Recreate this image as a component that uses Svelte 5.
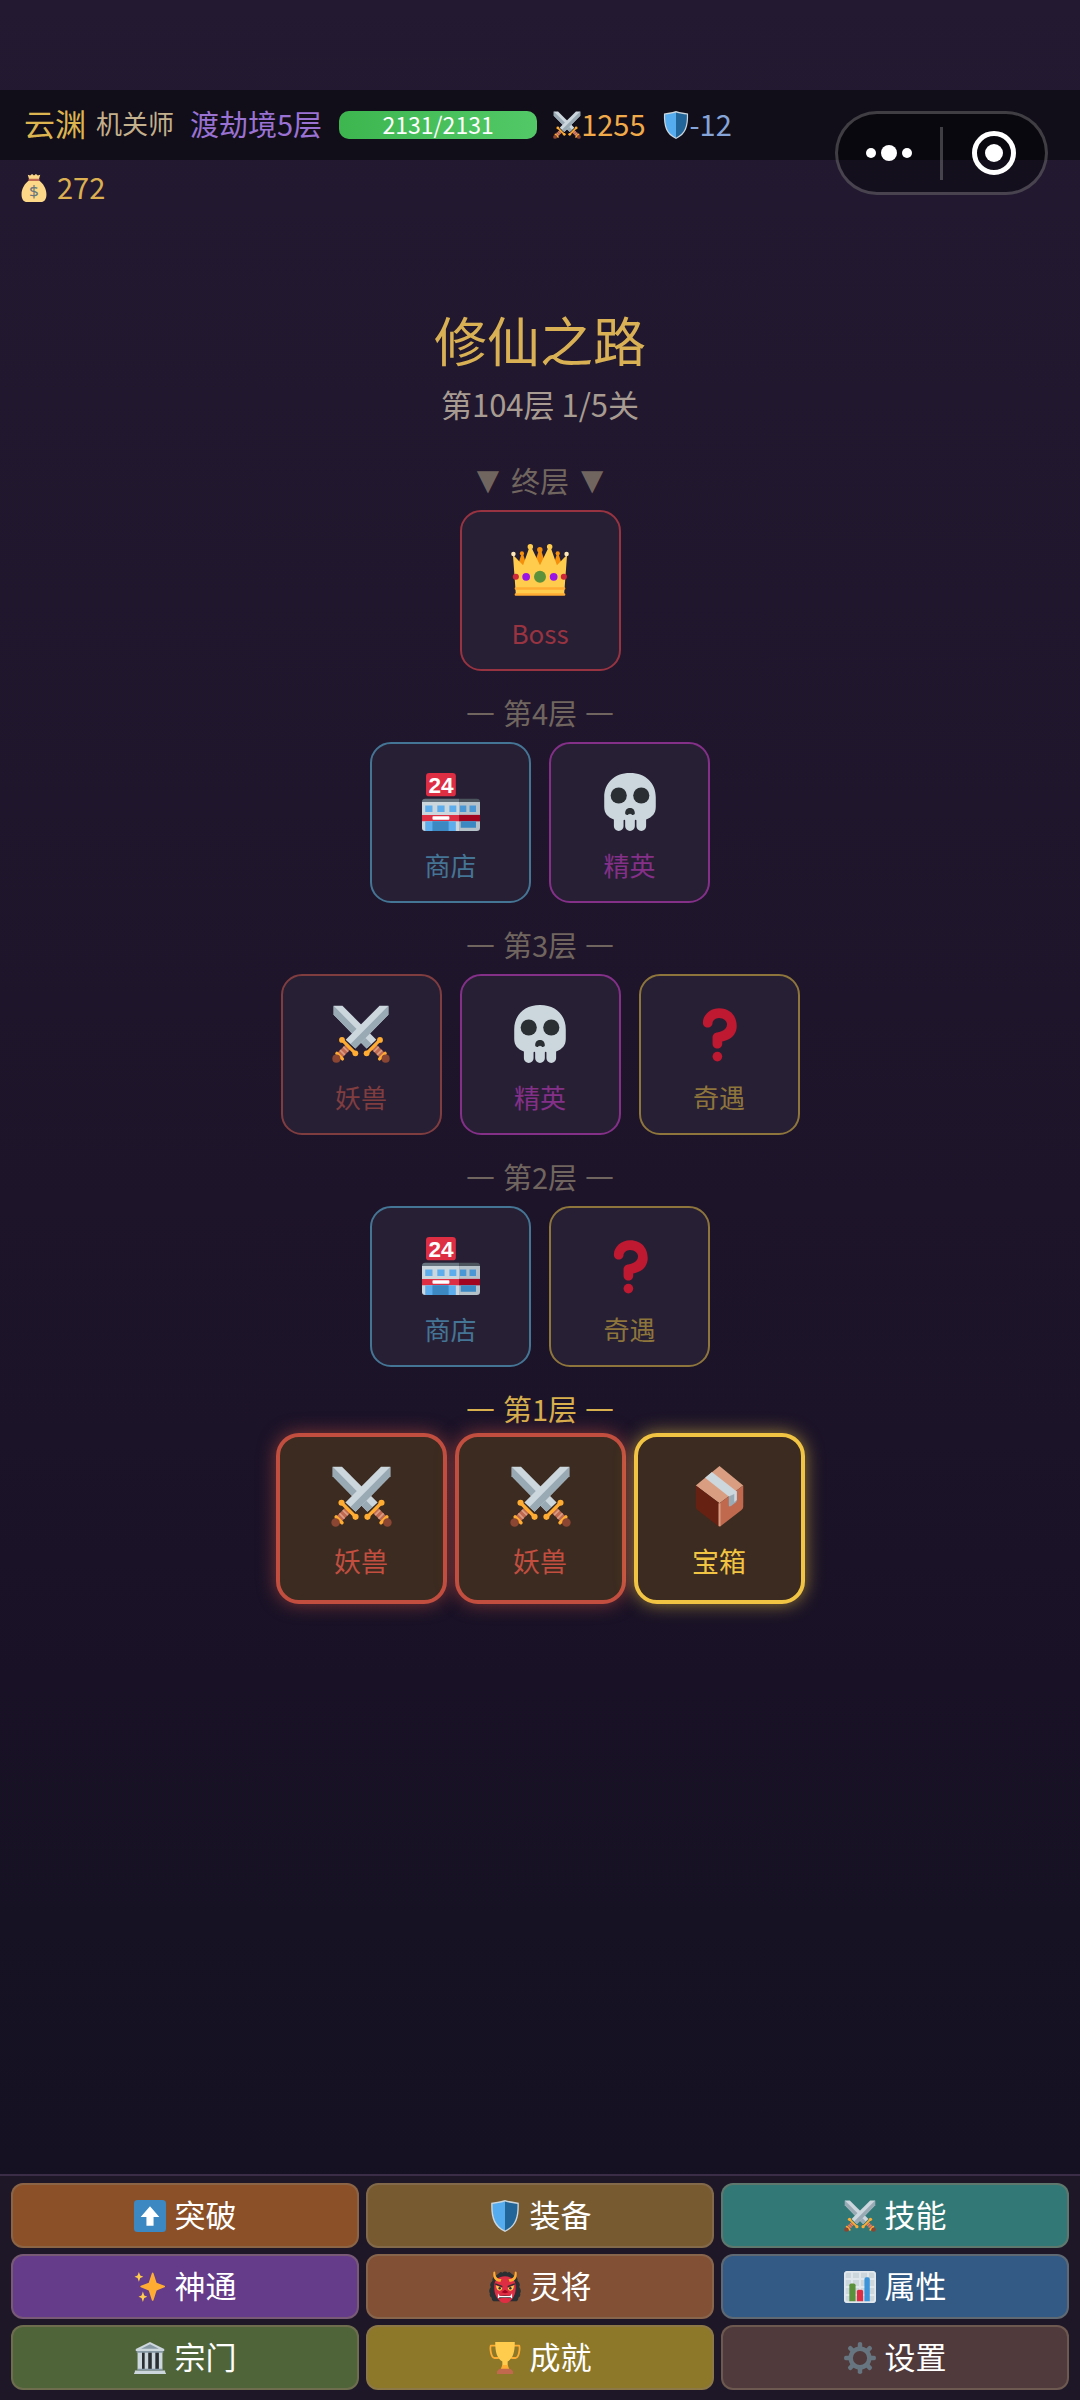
<script lang="ts">
	type Node = { kind: string; icon: string; label: string };

	const monster: Node = { kind: 'monster', icon: 'swords', label: '妖兽' };
	const elite: Node = { kind: 'elite', icon: 'skull', label: '精英' };
	const shop: Node = { kind: 'shop', icon: 'store', label: '商店' };
	const event: Node = { kind: 'event', icon: 'question', label: '奇遇' };
	const chest: Node = { kind: 'chest', icon: 'box', label: '宝箱' };
	const boss: Node = { kind: 'boss', icon: 'crown', label: 'Boss' };

	const floors = [
		{ title: '终层', mark: '▼', nodes: [boss], last: true },
		{ title: '第4层', mark: '—', nodes: [shop, elite] },
		{ title: '第3层', mark: '—', nodes: [monster, elite, event] },
		{ title: '第2层', mark: '—', nodes: [shop, event] },
		{ title: '第1层', mark: '—', nodes: [monster, monster, chest], active: true }
	];

	const menu = [
		{ id: 'breakthrough', icon: 'up', label: '突破' },
		{ id: 'equip', icon: 'shield', label: '装备' },
		{ id: 'skill', icon: 'swords', label: '技能' },
		{ id: 'magic', icon: 'sparkles', label: '神通' },
		{ id: 'spirit', icon: 'ogre', label: '灵将' },
		{ id: 'stats', icon: 'chart', label: '属性' },
		{ id: 'sect', icon: 'temple', label: '宗门' },
		{ id: 'achieve', icon: 'trophy', label: '成就' },
		{ id: 'settings', icon: 'gear', label: '设置' }
	];

	const player = { name: '云渊', job: '机关师', realm: '渡劫境5层', hp: 2131, maxHp: 2131, atk: 1255, def: -12, gold: 272 };
	const hpPercent = (player.hp / player.maxHp) * 100;
</script>

{#snippet sword()}
	<path fill="#ccd6dd" d="M29.5.5H35V6L14.5 27 8.5 21.5z" />
	<path fill="#99aab5" d="M35 .5V6L14.5 27l-3-2.8z" />
	<path fill="#bf6952" d="M8.5 24.5l3 3-6.5 6.500-3-3z" />
	<path stroke="#d99e82" stroke-width="1" d="M7 26l3 3M5 28l3 3" />
	<path stroke="#ffac33" stroke-width="2" stroke-linecap="round" d="M6.500 22l8 8M3 30l3.500 3.500" />
	<circle fill="#ffac33" cx="6.200" cy="21.700" r="1.800" />
	<circle fill="#ffac33" cx="14.500" cy="30" r="1.800" />
	<circle fill="#8a4633" cx="2.700" cy="33.300" r="2.500" />
{/snippet}

{#snippet icon(name: string)}
	<svg class="icon" viewBox="0 0 36 36" fill="none" aria-hidden="true">
		{#if name === 'swords'}
			<g transform="matrix(-1 0 0 1 36 0)">{@render sword()}</g>
			{@render sword()}
		{:else if name === 'skull'}
			<path fill="#ccd6dd" d="M18 0C8 0 2 6.500 2 15v6c0 4 2 6.500 6 7.800V33a3 3 0 0 0 6 0v-3.500a.5.5 0 0 1 1 0V33a3 3 0 0 0 6 0v-3.500a.5.5 0 0 1 1 0V33a3 3 0 0 0 6 0v-4.200c4-1.300 6-3.800 6-7.800v-6C34 6.500 28 0 18 0z" />
			<circle fill="#292f33" cx="11" cy="14" r="5" />
			<circle fill="#292f33" cx="25" cy="14" r="5" />
			<path fill="#292f33" d="M15 25c0-2 1.300-3.200 3-3.200s3 1.200 3 3.200c0 .900-1.500 1.400-2 .700-.4-.6-.7-.5-1 0-.3-.5-.6-.6-1 0-.5.700-2 .200-2-.700z" />
		{:else if name === 'question'}
			<path fill="#be1931" d="M17 27c-1.657 0-3-1.343-3-3v-4c0-1.657 1.343-3 3-3 .603-.006 6-1 6-5 0-2-2-4-5-4-2.441 0-4 2-4 3 0 1.657-1.343 3-3 3s-3-1.343-3-3c0-4.878 4.580-9 10-9 8 0 11 5.982 11 11 0 4.145-2.277 7.313-6.413 8.920-.9.351-1.790.587-2.587.747V24c0 1.657-1.343 3-3 3z" />
			<circle fill="#be1931" cx="17" cy="32" r="3" />
		{:else if name === 'store'}
			<rect fill="#dd2e44" x="2.500" width="18.500" height="14.500" rx="2" />
			<text x="11.800" y="12.300" text-anchor="middle" class="sign">24</text>
			<path fill="#ccd6dd" d="M0 18h23v18H2a2 2 0 0 1-2-2z" />
			<path fill="#b5c1c9" d="M23 18h13v16a2 2 0 0 1-2 2H23z" />
			<path fill="#66757f" d="M2 16h21v2H0q0-2 2-2z" />
			<path fill="#4b545d" d="M23 16h11q2 0 2 2H23z" />
			<path fill="#5dadec" d="M2 20.200h4.500v4H2zM9.500 20.200H14v4H9.500zM17 20.200h4.300v4H17z" />
			<path fill="#4a97d6" d="M23.500 20.200h4v4h-4zM29.500 20.200h4v4h-4z" />
			<path fill="#dd2e44" d="M0 26h23v4H0z" />
			<path fill="#a0041e" d="M23 26h13v4H23z" />
			<rect fill="#fff" x="6.500" y="26.800" width="10.500" height="2.200" rx=".5" />
			<path fill="#5dadec" d="M2 30h19v6H2z" />
			<path fill="#3b88c3" d="M6.500 30h10v6h-10zM24 30h9.500v4H24z" />
		{:else if name === 'crown'}
			<circle fill="#f4900c" cx="6.800" cy="7.700" r="1.300" />
			<circle fill="#f4900c" cx="17.900" cy="5.500" r="1.700" />
			<circle fill="#f4900c" cx="29" cy="7.700" r="1.300" />
			<path fill="#f4900c" d="M6.500 8h1L10 16H4zM17.200 6h1.600L22 16h-8zM28.500 8h1L32 16h-6z" />
			<path fill="#ffcc4d" d="M1.200 8.500L7.500 15l4-11.500h1L18 15l5.500-11.500h1L28.500 15l6.300-6.500L33 33H3z" />
			<circle fill="#ffe8b6" cx="1.500" cy="8" r="1.400" />
			<circle fill="#ffcc4d" cx="12" cy="3.600" r="1.700" />
			<circle fill="#ffcc4d" cx="24" cy="3.600" r="1.700" />
			<circle fill="#ffe8b6" cx="34.500" cy="8" r="1.400" />
			<path stroke="#ffac33" stroke-width="1.500" stroke-linecap="round" d="M3 29.500h30M3 33.200h30" />
			<circle fill="#5c913b" cx="18" cy="22.200" r="3.700" />
			<circle fill="#9a14e8" cx="9.400" cy="22.200" r="2.400" />
			<circle fill="#9a14e8" cx="26.500" cy="22.200" r="2.400" />
			<circle fill="#ce2839" cx="3" cy="22.200" r="1.900" />
			<circle fill="#ce2839" cx="32.800" cy="22.200" r="1.900" />
		{:else if name === 'box'}
			<path fill="#d99e82" d="M18 0l14 11.500L18 22 4 11.500z" />
			<path fill="#662113" d="M4 11.500L18 22v14L5 26q-1-.8-1-2z" />
			<path fill="#c1694f" d="M32 11.500L18 22v14l13-10q1-.8 1-2z" />
			<path stroke="#d99e82" stroke-width="1.200" d="M18 22v13.500" />
			<path fill="#99aab5" d="M23.500 18l4.700-3.500V20q0 1-.7 1.600l-2.500 1.900q-1.500 1-1.500-.5z" />
			<path fill="#ccd6dd" d="M9.500 7l4-3.500L28.200 15v5l-1.500 1.200v-4.700L23.500 18z" />
		{:else if name === 'shield'}
			<path fill="#ccd6dd" d="M18 0C12 2 7 2 2.500 3.200 2 20 5 30 18 36 31 30 34 20 33.500 3.200 29 2 24 2 18 0z" />
			<path fill="#55acee" d="M18 1.800C13 3.500 8.500 3.500 4 4.600 3.800 19.500 6.500 28.700 18 34.300z" />
			<path fill="#269" d="M18 1.800c5 1.700 9.500 1.700 14 2.800.2 14.900-2.500 24.100-14 29.700z" />
		{:else if name === 'bag'}
			<path fill="#fdd888" d="M10 1l3 1 2.500-2L18 2l2.500-2L23 2l3-1-2 7c6 4 10 11 10 18 0 7-3 10-7 10H9c-4 0-7-3-7-10C2 19 6 12 12 8z" />
			<path fill="#bf6952" d="M11.500 6h13q1.500 1.500 0 3h-13q-1.500-1.500 0-3z" />
			<text x="18" y="30" text-anchor="middle" class="coin">$</text>
		{:else if name === 'up'}
			<rect fill="#3b88c3" width="36" height="36" rx="4" />
			<path fill="#fff" d="M18 7l10.500 12H22v10h-8V19H7.500z" />
		{:else if name === 'sparkles'}
			<path fill="#ffac33" d="M34.300 16.600l-8.900-3.300-3.500-10.800c-.3-1-1.500-1-1.800 0l-3.500 10.800-8.900 3.300c-.8.300-.8 1.500 0 1.800l8.900 3.600 3.500 10.800c.3 1 1.500 1 1.800 0L25.400 22l8.900-3.600c.8-.3.8-1.500 0-1.800z" />
			<path fill="#ffcc4d" d="M10 23l1.500 4.500L15 29l-3.500 1.500L10 35l-1.500-4.500L5 29l3.500-1.500zM5.500 1L7 5l3.500 1.500L7 8l-1.500 4L4 8 .5 6.500 4 5z" />
		{:else if name === 'ogre'}
			<path fill="#292f33" d="M12 2q1-2 3 0 3-3 6 0 2-2 3 0l5 4q4 1 3 5 4 3 2 7 3 4 1 7 1 4-2 5 0 5-5 4H8q-5 1-5-4-3-1-2-5-2-3 1-7-2-4 2-7-1-4 3-5z" />
			<path fill="#dd2e44" d="M18 6c7 0 12 4 12 11 0 5 0 9-3 13s-5 6-9 6-6-2-9-6-3-8-3-13C6 10 11 6 18 6z" />
			<path fill="#ffac33" d="M5 1c-1 7 2 11 8 11l1-3C9 9 7 6 7 1q-1-1-2 0zM31 1c1 7-2 11-8 11l-1-3c5 0 7-3 7-8q1-1 2 0z" />
			<path fill="#ffcc4d" d="M8 16l7 3q-1 4-4 3-3-1-3-6zM28 16l-7 3q1 4 4 3 3-1 3-6z" />
			<circle fill="#292f33" cx="12" cy="19.500" r="1.400" />
			<circle fill="#292f33" cx="24" cy="19.500" r="1.400" />
			<path stroke="#292f33" stroke-width="1.500" d="M7 14.500l8 3M29 14.500l-8 3" />
			<path fill="#a0041e" d="M14 24l4-3 4 3-4 1z" />
			<path fill="#292f33" d="M11 28.500q7-2 14 0V31q-7-2-14 0z" />
			<path fill="#fff" d="M10 25l2 3h12l2-3v6l-2-1.500H12L10 31z" />
		{:else if name === 'chart'}
			<rect fill="#ccd6dd" width="36" height="36" rx="4" />
			<path stroke="#e1e8ed" stroke-width="2" d="M1 9h34M1 18h34M1 27h34M9 1v34M18 1v34M27 1v34" />
			<rect stroke="#e1e8ed" stroke-width="2" x="1" y="1" width="34" height="34" rx="3" />
			<path fill="#5c913b" d="M6 16q0-2 2-2h3q2 0 2 2v18H6z" />
			<path fill="#dd2e44" d="M14.500 23q0-2 2-2h3q2 0 2 2v11h-7z" />
			<path fill="#3b94d9" d="M23 9q0-2 2-2h2q2 0 2 2v25h-6z" />
		{:else if name === 'temple'}
			<path fill="#292f33" d="M6 11h25v20H6z" />
			<path fill="#ccd6dd" d="M18 0L2 8v2h32V8zM4 11h5v20H4zM12 11h4v20h-4zM20 11h4v20h-4zM28 11h4v20h-4zM1 32h34v2q1 0 1 2H0q0-2 1-2z" />
			<path fill="#8899a6" d="M18 2.500L8 7.500h20zM3 10h30v2H3zM4 30h28v2H4z" />
		{:else if name === 'trophy'}
			<path stroke="#ffac33" stroke-width="2" stroke-linejoin="round" d="M8 4H2c-1 3 0 13 4 14h5M28 4h6c1 3 0 13-4 14h-5" />
			<path fill="#ffcc4d" d="M7 0h22c0 12-2 18-8 22v7h-6v-7C9 18 7 12 7 0z" />
			<path fill="#ffac33" d="M15 26h6l2 5H13z" />
			<path fill="#c1694f" d="M12 30h12l3 3v3H9v-3z" />
		{:else if name === 'gear'}
			<circle stroke="#66757f" stroke-width="5" cx="18" cy="18" r="10.500" />
			{#each [0, 45, 90, 135, 180, 225, 270, 315] as angle}
				<path fill="#66757f" d="M15.500 7V2q0-2 2.500-2t2.500 2v5z" transform="rotate({angle} 18 18)" />
			{/each}
		{/if}
	</svg>
{/snippet}

<div class="game">
	<header>
		<div class="status">
			<span class="name">{player.name}</span>
			<span class="job">{player.job}</span>
			<span class="realm">{player.realm}</span>
			<div class="hp">
				<div class="hp-fill" style="width: {hpPercent}%"></div>
				<span class="hp-text">{player.hp}/{player.maxHp}</span>
			</div>
			<div class="stat atk">{@render icon('swords')}<span>{player.atk}</span></div>
			<div class="stat def">{@render icon('shield')}<span>{player.def}</span></div>
		</div>
		<div class="gold">{@render icon('bag')}<span>{player.gold}</span></div>

		<div class="capsule">
			<button aria-label="更多">
				<svg width="46" height="18" viewBox="0 0 46 18" fill="#fff">
					<circle cx="5" cy="9" r="5" />
					<circle cx="23" cy="9" r="8" />
					<circle cx="41" cy="9" r="5" />
				</svg>
			</button>
			<span class="divider"></span>
			<button aria-label="关闭">
				<svg width="44" height="44" viewBox="0 0 44 44">
					<circle cx="22" cy="22" r="19.500" fill="none" stroke="#fff" stroke-width="5" />
					<circle cx="22" cy="22" r="9" fill="#fff" />
				</svg>
			</button>
		</div>
	</header>

	<main>
		<h1>修仙之路</h1>
		<p class="progress">第104层 1/5关</p>

		{#each floors as floor}
			<section class="floor" class:active={floor.active} class:last={floor.last}>
				<h2>
					<span class="mark">{floor.mark}</span>
					{floor.title}
					<span class="mark">{floor.mark}</span>
				</h2>
				<div class="nodes">
					{#each floor.nodes as node}
						<button class="node {node.kind}" disabled={!floor.active}>
							{@render icon(node.icon)}
							<span>{node.label}</span>
						</button>
					{/each}
				</div>
			</section>
		{/each}
	</main>

	<nav>
		{#each menu as item}
			<button class={item.id}>
				{@render icon(item.icon)}
				<span>{item.label}</span>
			</button>
		{/each}
	</nav>
</div>

<style>
	:global(body) {
		margin: 0;
		background: #130f20;
	}

	.game {
		position: relative;
		box-sizing: border-box;
		min-height: 100vh;
		padding-top: 90px;
		display: flex;
		flex-direction: column;
		background: linear-gradient(#231a31, #1d142a 50%, #130f20);
		font-family: "Noto Sans CJK SC", sans-serif;
	}

	button {
		margin: 0;
		padding: 0;
		font: inherit;
		cursor: pointer;
	}

	.icon {
		display: block;
		flex-shrink: 0;
		width: 28px;
		height: 28px;
	}

	.status {
		display: flex;
		align-items: center;
		height: 70px;
		padding-left: 24px;
		background: #110e19;
		font-size: 29px;
		line-height: 40px;
		white-space: nowrap;
	}

	/* the CJK face sits low in its line box */
	.status > span,
	.stat span,
	.gold span,
	nav span {
		padding-bottom: 4px;
	}

	.name {
		font-size: 31px;
		color: #dcb450;
	}

	.job {
		margin-left: 10px;
		font-size: 26px;
		color: #c4b08c;
	}

	.realm {
		margin-left: 16px;
		color: #9a72d4;
	}

	.hp {
		position: relative;
		width: 198px;
		height: 28px;
		margin-left: 17px;
		border-radius: 10px;
		background: #2c2436;
	}

	.hp-fill {
		height: 100%;
		border-radius: 10px;
		background: linear-gradient(90deg, #3db650, #52c966);
	}

	.hp-text {
		position: absolute;
		inset: -4px 0;
		font-size: 23px;
		line-height: 34px;
		text-align: center;
		color: #fff;
	}

	.stat {
		display: flex;
		align-items: center;
		margin-left: 16px;
	}

	.atk {
		color: #f0aa4a;
	}

	.def {
		color: #86a4d8;
	}

	.gold {
		display: flex;
		align-items: center;
		gap: 9px;
		height: 56px;
		padding-left: 20px;
		font-size: 29px;
		color: #dcb050;
	}

	.gold .icon {
		height: 30px;
	}

	.coin {
		font: 22px "Noto Sans", sans-serif;
		fill: #67757f;
	}

	.sign {
		font: bold 14px "Liberation Sans", sans-serif;
		fill: #fff;
	}

	.capsule {
		position: absolute;
		top: 111px;
		right: 32px;
		box-sizing: border-box;
		display: flex;
		align-items: center;
		width: 213px;
		height: 84px;
		border: 3px solid rgba(255, 255, 255, 0.22);
		border-radius: 42px;
		background: rgba(0, 0, 0, 0.4);
	}

	.capsule button {
		flex: 1;
		display: flex;
		align-items: center;
		justify-content: center;
		height: 100%;
		border: none;
		background: none;
	}

	.divider {
		width: 3px;
		height: 53px;
		background: rgba(255, 255, 255, 0.22);
	}

	main {
		flex: 1;
		padding: 91px 16px 24px;
		text-align: center;
	}

	h1 {
		margin: 0;
		font-size: 53px;
		font-weight: 400;
		line-height: 64px;
		color: #d9b154;
	}

	.progress {
		margin: 13px 0 36px;
		font-size: 31px;
		line-height: 40px;
		color: #a89c92;
	}

	.floor {
		margin-bottom: 21px;
	}

	h2 {
		display: flex;
		justify-content: center;
		gap: 8px;
		margin: 0 0 10px;
		font-size: 29px;
		font-weight: 400;
		line-height: 40px;
		color: #71665f;
	}

	.mark {
		font-family: "DejaVu Sans", sans-serif;
	}

	.last h2 {
		gap: 12px;
	}

	.nodes {
		display: flex;
		justify-content: center;
		gap: 18px;
	}

	.node {
		box-sizing: border-box;
		display: flex;
		flex-direction: column;
		align-items: center;
		width: 161px;
		height: 161px;
		padding-top: 29px;
		border: 2px solid currentColor;
		border-radius: 21px;
		background: #271f34;
		font-size: 26px;
		line-height: 36px;
	}

	.node .icon {
		width: 58px;
		height: 58px;
		margin-bottom: 16px;
	}

	.boss {
		color: #983341;
	}

	.shop {
		color: #457595;
	}

	.elite {
		color: #843089;
	}

	.monster {
		color: #803d40;
	}

	.event {
		color: #8d753c;
	}

	.active h2 {
		margin-bottom: 5px;
		color: #d8b04e;
	}

	.active .nodes {
		gap: 8px;
	}

	.active .node {
		width: 171px;
		height: 171px;
		border-width: 4px;
		border-radius: 23px;
		background: #3b2b20;
		font-size: 27px;
	}

	.active .node .icon {
		width: 61px;
		height: 61px;
	}

	.active .monster {
		color: #c24e40;
		box-shadow: 0 0 18px rgba(194, 78, 64, 0.6);
	}

	.active .chest {
		color: #f2c443;
		box-shadow: 0 0 18px rgba(242, 196, 67, 0.6);
	}

	nav {
		display: grid;
		grid-template-columns: repeat(3, 1fr);
		gap: 6px 7px;
		padding: 7px 11px 10px;
		border-top: 2px solid #3b2c48;
		background: #1e1727;
	}

	nav button {
		box-sizing: border-box;
		display: flex;
		align-items: center;
		justify-content: center;
		gap: 9px;
		height: 65px;
		border: 2px solid rgba(140, 120, 100, 0.5);
		border-radius: 12px;
		font-size: 31px;
		color: #fff;
	}

	nav .icon {
		width: 32px;
		height: 32px;
	}

	.breakthrough {
		background: #8b5028;
	}

	.equip {
		background: #775a30;
	}

	.skill {
		background: #327876;
	}

	.magic {
		background: #653c8a;
	}

	.spirit {
		background: #825034;
	}

	.stats {
		background: #325a84;
	}

	.sect {
		background: #50643a;
	}

	.achieve {
		background: #8c7828;
	}

	.settings {
		background: #503a3c;
	}
</style>
